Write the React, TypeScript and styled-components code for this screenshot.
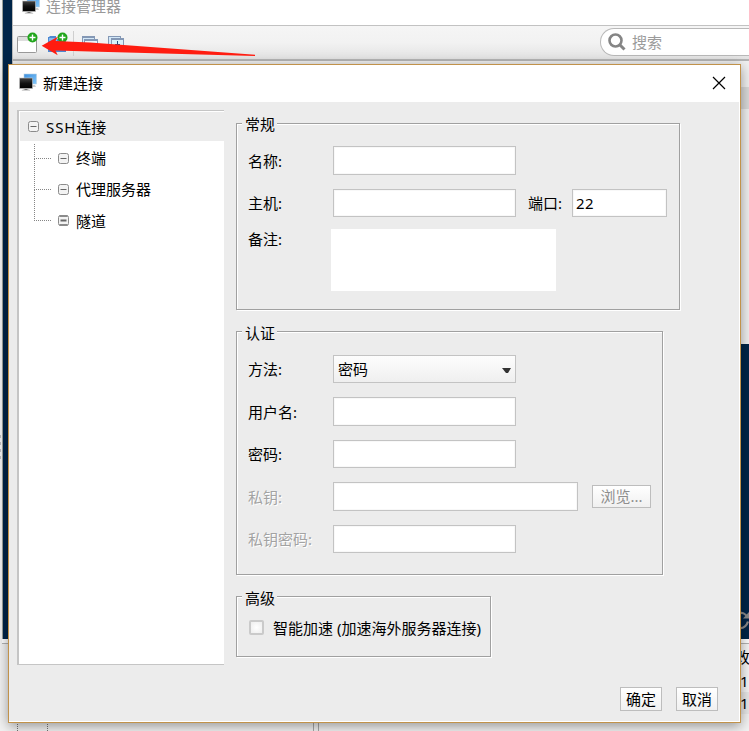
import React from 'react';
import styled, { createGlobalStyle } from 'styled-components';

const GlobalStyle = createGlobalStyle`
  * { box-sizing: border-box; }
  body { margin: 0; background: #ececec; }
  body, input, textarea, button {
    font-family: "Noto Sans", "Noto Sans CJK SC", sans-serif;
    font-size: 15px;
    line-height: 20px;
    color: #000;
  }
`;

const Desktop = styled.div`
  position: relative;
  width: 749px;
  height: 731px;
  overflow: hidden;
  background: #f0f0f0;
`;

/* Main application window behind everything */
const HostWindow = styled.div`
  display: flex;
  height: 100%;
`;
const DockEdge = styled.div`
  width: 2px;
  display: flex;
  flex-direction: column;
  justify-content: center;
  gap: 4px;
  padding-top: 162px;
  background: #f2f2f2;
`;
const Grip = styled.span`
  width: 1px;
  height: 3px;
  background: #bdbdbd;
`;
const HostMain = styled.div`
  flex: 1;
  min-width: 0;
  display: flex;
  flex-direction: column;
`;
const Terminal = styled.div`
  height: 639px;
  border-left: 1px solid #9aa09a;
  background: #002548;
  display: flex;
  justify-content: flex-end;
  align-items: flex-end;
  padding-bottom: 9px;
`;
const FilePanel = styled.div`
  flex: 1;
  display: flex;
  margin-top: 4px;
  border-top: 1px solid #b4b4b4;
  background: #f3f3f3;
  box-shadow: 0 -4px 0 #fff;
`;
const FolderTree = styled.div`
  width: 312px;
  display: flex;
  gap: 29px;
  padding: 72px 0 0 15px;
  border-right: 1px solid #a8a8a8;
`;
const Dots = styled.span<{ $offset?: number }>`
  margin-top: ${p => p.$offset ?? 0}px;
  border-left: 1px dotted #777;
`;
const FileTable = styled.div`
  flex: 1;
  min-width: 0;
  margin-left: 4px;
  border-left: 1px solid #a8a8a8;
  overflow: hidden;
`;
const FileRow = styled.div<{ $pad: number; $shade?: boolean }>`
  height: 22px;
  line-height: 22px;
  padding-left: ${p => p.$pad}px;
  white-space: nowrap;
  background: ${p => (p.$shade ? '#e9e9e9' : '#f6f6f6')};
  &:first-child { height: 26px; line-height: 27px; }
`;

/* Connection manager window */
const Manager = styled.section`
  position: absolute;
  left: 12px;
  top: 0;
  width: 737px;
  height: 344px;
  border-left: 1px solid #b9b9b9;
  background: #e9e9e9;
  display: flex;
  flex-direction: column;
`;
const ManagerTitle = styled.header`
  height: 25px;
  display: flex;
  padding-left: 9px;
  gap: 6px;
  background: #fff;
  color: #999;
  & > svg { margin-top: -4px; flex: none; }
  & > span { margin-top: -4px; }
`;
const Toolbar = styled.div`
  height: 36px;
  display: flex;
  align-items: center;
  border-top: 1px solid #c2c2c2;
  border-bottom: 2px solid #b5b5b5;
  background: linear-gradient(#f5f5f5, #f2f2f2 50%, #e3e3e3);
`;
const Tools = styled.div`
  flex: none;
  width: 587px;
  padding-left: 3px;
  display: flex;
`;
const Search = styled.div`
  flex: 1;
  height: 28px;
  margin-top: -1px;
  display: flex;
  align-items: center;
  gap: 6px;
  padding-left: 7px;
  border: 1px solid #b9b9b9;
  border-right: 0;
  border-radius: 14px 0 0 14px;
  background: #fff;
  color: #9b9b9b;
`;
const ManagerHead = styled.div`
  height: 26px;
  background: #f1f1f1;
`;
const ManagerList = styled.div`
  flex: 1;
  border-top: 22px solid #dadada;
  background: #f0f0f0;
`;

/* Dialog */
const Dialog = styled.section`
  position: absolute;
  left: 8px;
  top: 64px;
  width: 733px;
  height: 659px;
  display: flex;
  flex-direction: column;
  border: 1px solid #c1924a;
  background: #fff;
  box-shadow: 0 3px 12px rgba(0, 0, 0, 0.4);
`;
const TitleBar = styled.header`
  height: 37px;
  display: flex;
  align-items: center;
  padding: 0 14px 2px 10px;
  & > svg:first-child { margin-right: 6px; }
`;
const Title = styled.h1`
  flex: 1;
  margin: 0;
  font-size: 15px;
  line-height: 20px;
  font-weight: 400;
`;
const Close = styled.button`
  display: flex;
  padding: 0;
  border: 0;
  background: none;
`;
const Body = styled.div`
  flex: 1;
  display: flex;
  gap: 12px;
  margin: 0 1px 1px 0;
  padding: 8px 0 0 8px;
  background: #ececec;
`;
const Tree = styled.nav`
  width: 207px;
  height: 555px;
  padding-top: 1px;
  border: 1px solid #c5c5c5;
  border-left-width: 2px;
  border-right: 0;
  background: #fff;
`;
const TreeItem = styled.div<{ $root?: boolean }>`
  display: flex;
  align-items: center;
  height: ${p => (p.$root ? 29 : 31)}px;
  margin-left: ${p => (p.$root ? 1 : 15)}px;
  margin-bottom: ${p => (p.$root ? 2 : 0)}px;
  padding-left: ${p => (p.$root ? 8 : 0)}px;
  background: ${p => (p.$root ? '#ececec' : '#fff')};
  & > svg { margin-right: 7px; }
`;
const TreeText = styled.span<{ $raise?: boolean }>`
  padding-bottom: ${p => (p.$raise ? 2 : 0)}px;
`;
const Latin = styled.span`
  letter-spacing: 0.9px;
`;
const Branch = styled.i<{ $first?: boolean }>`
  align-self: flex-start;
  width: 17px;
  height: ${p => (p.$first ? 15 : 31)}px;
  margin: ${p => (p.$first ? 1 : -15)}px 7px 0 0;
  border: 0 dotted #858585;
  border-width: 0 0 1px 1px;
  z-index: 1;
`;
const Main = styled.form`
  flex: 1;
  display: flex;
  flex-direction: column;
  align-items: flex-start;
  margin: 0;
  padding-right: 21px;
`;
const Group = styled.fieldset<{ $w: number; $h: number; $top: number }>`
  width: ${p => p.$w}px;
  height: ${p => p.$h}px;
  min-width: 0;
  margin: ${p => p.$top}px 0 0;
  padding: 0 0 0 11px;
  border: 1px solid #a0a0a0;
  box-shadow: 1px 1px 0 #fff, inset 1px 1px 0 #fff;
`;
const Legend = styled.legend<{ $drop?: number }>`
  height: 20px;
  margin-left: -6px;
  padding: ${p => p.$drop ?? 0}px 2px 0 3px;
  background: #ececec;
`;
const Row = styled.div<{ $h?: number; $top?: number; $muted?: boolean }>`
  display: flex;
  align-items: center;
  height: ${p => p.$h ?? 28}px;
  margin-top: ${p => p.$top ?? 14}px;
  color: ${p => (p.$muted ? '#a3a3a3' : '#000')};
  ${p => p.$muted && 'text-shadow: 1px 1px 0 #fff;'}
`;
const Label = styled.label`
  width: 85px;
  flex: none;
  white-space: nowrap;
`;
const PortLabel = styled(Label)`
  width: 56px;
  padding-left: 12px;
`;
const TextField = styled.input<{ $w?: number }>`
  width: ${p => p.$w ?? 183}px;
  height: 100%;
  padding: 0 3px;
  border: 1px solid #c3c3c3;
  border-radius: 0;
  background: #fff;
  box-shadow: inset 0 0 0 1px #f8f8f8;
  outline: 0;
`;
const PortField = styled(TextField)`
  letter-spacing: 0.4px;
`;
const Notes = styled.textarea`
  width: 225px;
  height: 62px;
  margin-left: -2px;
  border: 0;
  resize: none;
  background: #fff;
`;
const NotesRow = styled(Row)`
  align-items: flex-start;
`;
const Combo = styled.div`
  width: 183px;
  height: 28px;
  display: flex;
  align-items: center;
  justify-content: space-between;
  padding: 0 4px;
  border: 1px solid #c3c3c3;
  background: linear-gradient(#fdfdfd, #efefef);
  & > svg { margin-top: 2px; }
`;
const PushButton = styled.button<{ $w: number; $muted?: boolean }>`
  width: ${p => p.$w}px;
  height: ${p => (p.$muted ? 23 : 24)}px;
  padding: 0;
  border: 1px solid #bdbdbd;
  background: linear-gradient(#fff, #f0f0f0);
  color: ${p => (p.$muted ? '#8e8e8e' : '#000')};
  white-space: nowrap;
`;
const BrowseButton = styled(PushButton)`
  margin: -1px 0 0 14px;
`;
const Check = styled.span`
  width: 15px;
  height: 15px;
  margin: -2px 9px 0 1px;
  border: 2px solid #cacaca;
  border-radius: 2px;
  background: radial-gradient(#fff, #ededed);
`;
const Actions = styled.footer`
  align-self: flex-end;
  display: flex;
  gap: 14px;
  margin-top: 30px;
`;

const Arrow = styled.svg`
  position: absolute;
  left: 41px;
  top: 35px;
`;

const Monitors = () => (
  <svg width="18" height="19" viewBox="0 0 18 19">
    <defs>
      <linearGradient id="screenBlue" x1="0" y1="0" x2="1" y2="1">
        <stop offset="0" stopColor="#3b8fdf" />
        <stop offset="1" stopColor="#83c7fa" />
      </linearGradient>
      <linearGradient id="screenDark" x1="0" y1="0" x2="0" y2="1">
        <stop offset="0" stopColor="#444" />
        <stop offset="0.5" stopColor="#111" />
        <stop offset="1" stopColor="#000" />
      </linearGradient>
    </defs>
    <rect x="5" y="1" width="12.5" height="10" fill="url(#screenBlue)" stroke="#b8cfe0" strokeWidth=".6" />
    <path d="M13 12h3l1 2h-4z" fill="#ccc" />
    <rect x=".5" y="5" width="13" height="10.5" fill="url(#screenDark)" stroke="#c6c6c6" strokeWidth=".6" />
    <path d="M4 16h6l1.5 2h-9z" fill="#d2d2d2" />
    <path d="M5.5 16h3v1h-3z" fill="#777" />
  </svg>
);

const ToolIcons = () => (
  <svg width="112" height="26" viewBox="16 30 112 26">
    <rect x="17.5" y="36.5" width="19" height="16" rx="1" fill="#fff" stroke="#9a9a9a" />
    <path d="M18 37h18v4H18z" fill="#dedede" />
    <path d="M48 52V37h1l1-1h6v3h10v13z" fill="#4d88d2" />
    <path d="M49 38h8v3h-8z" fill="#85b7ed" />
    {[32.5, 62.5].map(x => (
      <g key={x}>
        <circle cx={x} cy="37.5" r="5" fill="#20a51b" />
        <path d={`M${x - 3} 37.5h6M${x} 34.5v6`} stroke="#fff" strokeWidth="1.4" />
      </g>
    ))}
    <path d="M73.5 31v25" stroke="#cfcfcf" />
    <g fill="#d3e8f8" stroke="#8498b5">
      <rect x="82.5" y="36.5" width="12" height="10" />
      <path d="M82 37h13" strokeWidth="2" />
      <rect x="84.5" y="39.5" width="13" height="11" fill="#e9f6fc" />
      <path d="M84 40h14" strokeWidth="2" />
      <rect x="108.5" y="36.5" width="12" height="10" />
      <rect x="111.5" y="38.5" width="12" height="12" fill="#d8f1fa" />
      <path d="M111 39h13" strokeWidth="2" />
      <path d="M117.5 41v6M115 44.5h5" stroke="#234f83" />
    </g>
  </svg>
);

const Expander = ({ bold }: { bold?: boolean }) => (
  <svg width="11" height="11" viewBox="0 0 11 11">
    <rect x=".5" y=".5" width="10" height="10" rx="2" fill="#f3f3f3" stroke="#8b8b8b" />
    {bold && <path d="M1.5 1h8M1.5 10h8" stroke="#8b8b8b" strokeWidth="2" />}
    <path d="M2.5 5.5h6" stroke="#666" strokeWidth={bold ? 2 : 1} />
  </svg>
);

const children = ['终端', '代理服务器', '隧道'];

export default function App() {
  return (
    <Desktop>
      <GlobalStyle />
      <HostWindow>
        <DockEdge>
          <Grip /><Grip /><Grip /><Grip />
        </DockEdge>
        <HostMain>
          <Terminal>
            <svg width="13" height="20" viewBox="0 0 13 20" fill="none" stroke="#8c8c8c" strokeWidth="2.2">
              <path d="M3 3.5C6 2 9.5 3.5 11.5 7.5M3 18C7 18.5 10.5 16 12 11.5" />
              <path d="M7 8.500H13V2z" fill="#8c8c8c" stroke="none" />
            </svg>
          </Terminal>
          <FilePanel>
            <FolderTree>
              <Dots />
              <Dots $offset={6} />
            </FolderTree>
            <FileTable>
              <FileRow $pad={416}>改</FileRow>
              <FileRow $pad={421}>1</FileRow>
              <FileRow $pad={421} $shade>1</FileRow>
            </FileTable>
          </FilePanel>
        </HostMain>
      </HostWindow>

      <Manager>
        <ManagerTitle>
          <Monitors />
          <span>连接管理器</span>
        </ManagerTitle>
        <Toolbar>
          <Tools><ToolIcons /></Tools>
          <Search>
            <svg width="18" height="18" viewBox="0 0 18 18" fill="none" stroke="#858585">
              <circle cx="7.5" cy="7.5" r="6" strokeWidth="2.6" />
              <path d="M12 12l4.5 4.5" strokeWidth="3" />
            </svg>
            <span>搜索</span>
          </Search>
        </Toolbar>
        <ManagerHead />
        <ManagerList />
      </Manager>

      <Dialog>
        <TitleBar>
          <Monitors />
          <Title>新建连接</Title>
          <Close aria-label="关闭">
            <svg width="14" height="14" viewBox="0 0 14 14" stroke="#000" strokeWidth="1.2">
              <path d="M1 1l12 12M13 1L1 13" />
            </svg>
          </Close>
        </TitleBar>
        <Body>
          <Tree>
            <TreeItem $root><Expander /><TreeText><Latin>SSH</Latin>连接</TreeText></TreeItem>
            {children.map((name, i) => (
              <TreeItem key={name}>
                <Branch $first={i === 0} />
                <Expander bold={i === 2} />
                <TreeText $raise={i < 2}>{name}</TreeText>
              </TreeItem>
            ))}
          </Tree>
          <Main>
            <Group $w={444} $h={197} $top={3}>
              <Legend $drop={1}>常规</Legend>
              <Row $h={29} $top={13}><Label>名称:</Label><TextField /></Row>
              <Row>
                <Label>主机:</Label><TextField />
                <PortLabel>端口:</PortLabel>
                <PortField $w={95} defaultValue="22" />
              </Row>
              <NotesRow $h={62} $top={12}><Label>备注:</Label><Notes /></NotesRow>
            </Group>
            <Group $w={427} $h={254} $top={11}>
              <Legend $drop={2}>认证</Legend>
              <Row $top={14}>
                <Label>方法:</Label>
                <Combo>
                  密码
                  <svg width="9" height="5" viewBox="0 0 9 5"><path d="M0 0h9L6 5H4z" fill="#333" /></svg>
                </Combo>
              </Row>
              <Row $h={29}><Label>用户名:</Label><TextField /></Row>
              <Row><Label>密码:</Label><TextField /></Row>
              <Row $h={29} $muted>
                <Label>私钥:</Label><TextField $w={245} />
                <BrowseButton type="button" $w={59} $muted>浏览...</BrowseButton>
              </Row>
              <Row $muted><Label>私钥密码:</Label><TextField /></Row>
            </Group>
            <Group $w={255} $h={71} $top={11}>
              <Legend $drop={2}>高级</Legend>
              <Row $top={8}><Check /><span>智能加速 (加速海外服务器连接)</span></Row>
            </Group>
            <Actions>
              <PushButton type="button" $w={42}>确定</PushButton>
              <PushButton type="button" $w={42}>取消</PushButton>
            </Actions>
          </Main>
        </Body>
      </Dialog>

      <Arrow width="216" height="22" viewBox="41 35 216 22">
        <path d="M41.7 45.7L57.7 36.7L55.5 41L90 42.5L255 54.8V56L90 51.5L55.5 50.5L57.7 55.2Z" fill="#ff1c10" />
      </Arrow>
    </Desktop>
  );
}
